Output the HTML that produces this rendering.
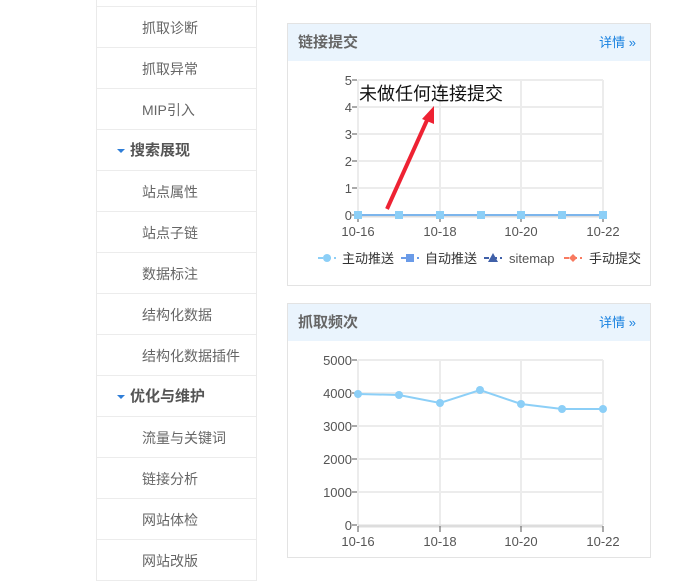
<!DOCTYPE html>
<html><head><meta charset="utf-8"><style>
*{margin:0;padding:0;box-sizing:border-box}
body{width:677px;height:575px;background:#fff;position:relative;overflow:hidden;font-family:"Liberation Sans","Noto Sans CJK SC",sans-serif;}
.side{position:absolute;left:96px;top:-34px;width:161px;border-left:1px solid #eaeaea;border-right:1px solid #eaeaea;}
.it{height:41px;border-bottom:1px solid #ececec;line-height:42px;padding-left:45px;font-size:14px;color:#666;}
.hd{padding-left:33px;font-weight:bold;color:#555;font-size:15px;position:relative}
.hd:before{content:"";position:absolute;left:20px;top:19px;border-left:4px solid transparent;border-right:4px solid transparent;border-top:4px solid #2f7ed8;}
.panel{position:absolute;left:287px;width:364px;border:1px solid #e3e3e3;}
.ph{height:37px;background:#eaf4fd;line-height:37px;padding-left:10px;font-size:15px;font-weight:bold;color:#666;position:relative}
.ph span{position:absolute;right:14px;top:0;font-size:13px;font-weight:normal;color:#1a82e0}
svg{position:absolute;left:0;top:0}
</style></head><body>
<div class="side">
<div class="it"></div>
<div class="it">抓取诊断</div>
<div class="it">抓取异常</div>
<div class="it">MIP引入</div>
<div class="it hd">搜索展现</div>
<div class="it">站点属性</div>
<div class="it">站点子链</div>
<div class="it">数据标注</div>
<div class="it">结构化数据</div>
<div class="it">结构化数据插件</div>
<div class="it hd">优化与维护</div>
<div class="it">流量与关键词</div>
<div class="it">链接分析</div>
<div class="it">网站体检</div>
<div class="it">网站改版</div>
</div>
<div class="panel" style="top:23px;height:263px"><div class="ph">链接提交<span>详情 »</span></div></div>
<div class="panel" style="top:303px;height:255px"><div class="ph">抓取频次<span>详情 »</span></div></div>
<svg width="677" height="575" font-family="Liberation Sans, Noto Sans CJK SC, sans-serif">
<g stroke="#ececec" stroke-width="2">
<line x1="358" y1="80" x2="603" y2="80"/><line x1="358" y1="107" x2="603" y2="107"/><line x1="358" y1="134" x2="603" y2="134"/><line x1="358" y1="161" x2="603" y2="161"/><line x1="358" y1="188" x2="603" y2="188"/>
<line x1="440" y1="80" x2="440" y2="215"/><line x1="521" y1="80" x2="521" y2="215"/><line x1="603" y1="80" x2="603" y2="215"/><line x1="358" y1="80" x2="358" y2="215"/>
<line x1="358" y1="216" x2="603" y2="216" stroke="#ddd" stroke-width="3"/>
</g>
<g stroke="#555" stroke-width="1">
<line x1="352" y1="80" x2="357" y2="80"/><line x1="352" y1="107" x2="357" y2="107"/><line x1="352" y1="134" x2="357" y2="134"/><line x1="352" y1="161" x2="357" y2="161"/><line x1="352" y1="188" x2="357" y2="188"/><line x1="352" y1="215" x2="357" y2="215"/>
<line x1="358" y1="216" x2="358" y2="222"/><line x1="440" y1="216" x2="440" y2="222"/><line x1="521" y1="216" x2="521" y2="222"/><line x1="603" y1="216" x2="603" y2="222"/>
</g>
<g font-size="13" fill="#555" text-anchor="end">
<text x="352" y="85">5</text><text x="352" y="112">4</text><text x="352" y="139">3</text><text x="352" y="166">2</text><text x="352" y="193">1</text><text x="352" y="220">0</text>
</g>
<g font-size="13" fill="#555" text-anchor="middle">
<text x="358" y="236">10-16</text><text x="440" y="236">10-18</text><text x="521" y="236">10-20</text><text x="603" y="236">10-22</text>
</g>
<line x1="358" y1="215" x2="603" y2="215" stroke="#7cb5ec" stroke-width="2"/>
<g fill="#8ccff7"><rect x="354" y="211" width="8" height="8"/><rect x="395" y="211" width="8" height="8"/><rect x="436" y="211" width="8" height="8"/><rect x="477" y="211" width="8" height="8"/><rect x="517" y="211" width="8" height="8"/><rect x="558" y="211" width="8" height="8"/><rect x="599" y="211" width="8" height="8"/></g>
<text x="359" y="100" font-size="18" fill="#111">未做任何连接提交</text>
<line x1="387" y1="209" x2="428" y2="118" stroke="#ee2233" stroke-width="4"/>
<polygon points="434,106 422,119 434,124" fill="#ee2233"/>
<g font-size="13" fill="#333">
<line x1="318" y1="258" x2="336" y2="258" stroke="#8ccff7" stroke-width="2" stroke-dasharray="5,3"/><circle cx="327" cy="258" r="4" fill="#8ccff7"/><text x="342" y="263">主动推送</text>
<line x1="401" y1="258" x2="419" y2="258" stroke="#6a9be8" stroke-width="2" stroke-dasharray="5,3"/><rect x="406" y="254" width="8" height="8" fill="#6a9be8"/><text x="425" y="263">自动推送</text>
<line x1="484" y1="258" x2="502" y2="258" stroke="#4060a8" stroke-width="2" stroke-dasharray="5,3"/><polygon points="493,253 498,262 488,262" fill="#4060a8"/><text x="509" y="263" fill="#555">sitemap</text>
<line x1="564" y1="258" x2="582" y2="258" stroke="#f87a60" stroke-width="2" stroke-dasharray="5,3"/><polygon points="573,254 577,258 573,262 569,258" fill="#f87a60"/><text x="589" y="263">手动提交</text>
</g>
<g stroke="#ececec" stroke-width="2">
<line x1="358" y1="360" x2="603" y2="360"/><line x1="358" y1="393" x2="603" y2="393"/><line x1="358" y1="426" x2="603" y2="426"/><line x1="358" y1="459" x2="603" y2="459"/><line x1="358" y1="492" x2="603" y2="492"/>
<line x1="440" y1="360" x2="440" y2="525"/><line x1="521" y1="360" x2="521" y2="525"/><line x1="603" y1="360" x2="603" y2="525"/><line x1="358" y1="360" x2="358" y2="525"/>
<line x1="358" y1="526" x2="603" y2="526" stroke="#ddd" stroke-width="3"/>
</g>
<g stroke="#555" stroke-width="1">
<line x1="352" y1="360" x2="357" y2="360"/><line x1="352" y1="393" x2="357" y2="393"/><line x1="352" y1="426" x2="357" y2="426"/><line x1="352" y1="459" x2="357" y2="459"/><line x1="352" y1="492" x2="357" y2="492"/><line x1="352" y1="525" x2="357" y2="525"/>
<line x1="358" y1="526" x2="358" y2="532"/><line x1="440" y1="526" x2="440" y2="532"/><line x1="521" y1="526" x2="521" y2="532"/><line x1="603" y1="526" x2="603" y2="532"/>
</g>
<g font-size="13" fill="#555" text-anchor="end">
<text x="352" y="365">5000</text><text x="352" y="398">4000</text><text x="352" y="431">3000</text><text x="352" y="464">2000</text><text x="352" y="497">1000</text><text x="352" y="530">0</text>
</g>
<g font-size="13" fill="#555" text-anchor="middle">
<text x="358" y="546">10-16</text><text x="440" y="546">10-18</text><text x="521" y="546">10-20</text><text x="603" y="546">10-22</text>
</g>
<polyline points="358,394 399,395 440,403 480,390 521,404 562,409 603,409" fill="none" stroke="#8ccff7" stroke-width="2"/>
<g fill="#8ccff7"><circle cx="358" cy="394" r="4"/><circle cx="399" cy="395" r="4"/><circle cx="440" cy="403" r="4"/><circle cx="480" cy="390" r="4"/><circle cx="521" cy="404" r="4"/><circle cx="562" cy="409" r="4"/><circle cx="603" cy="409" r="4"/></g>
</svg>
</body></html>
